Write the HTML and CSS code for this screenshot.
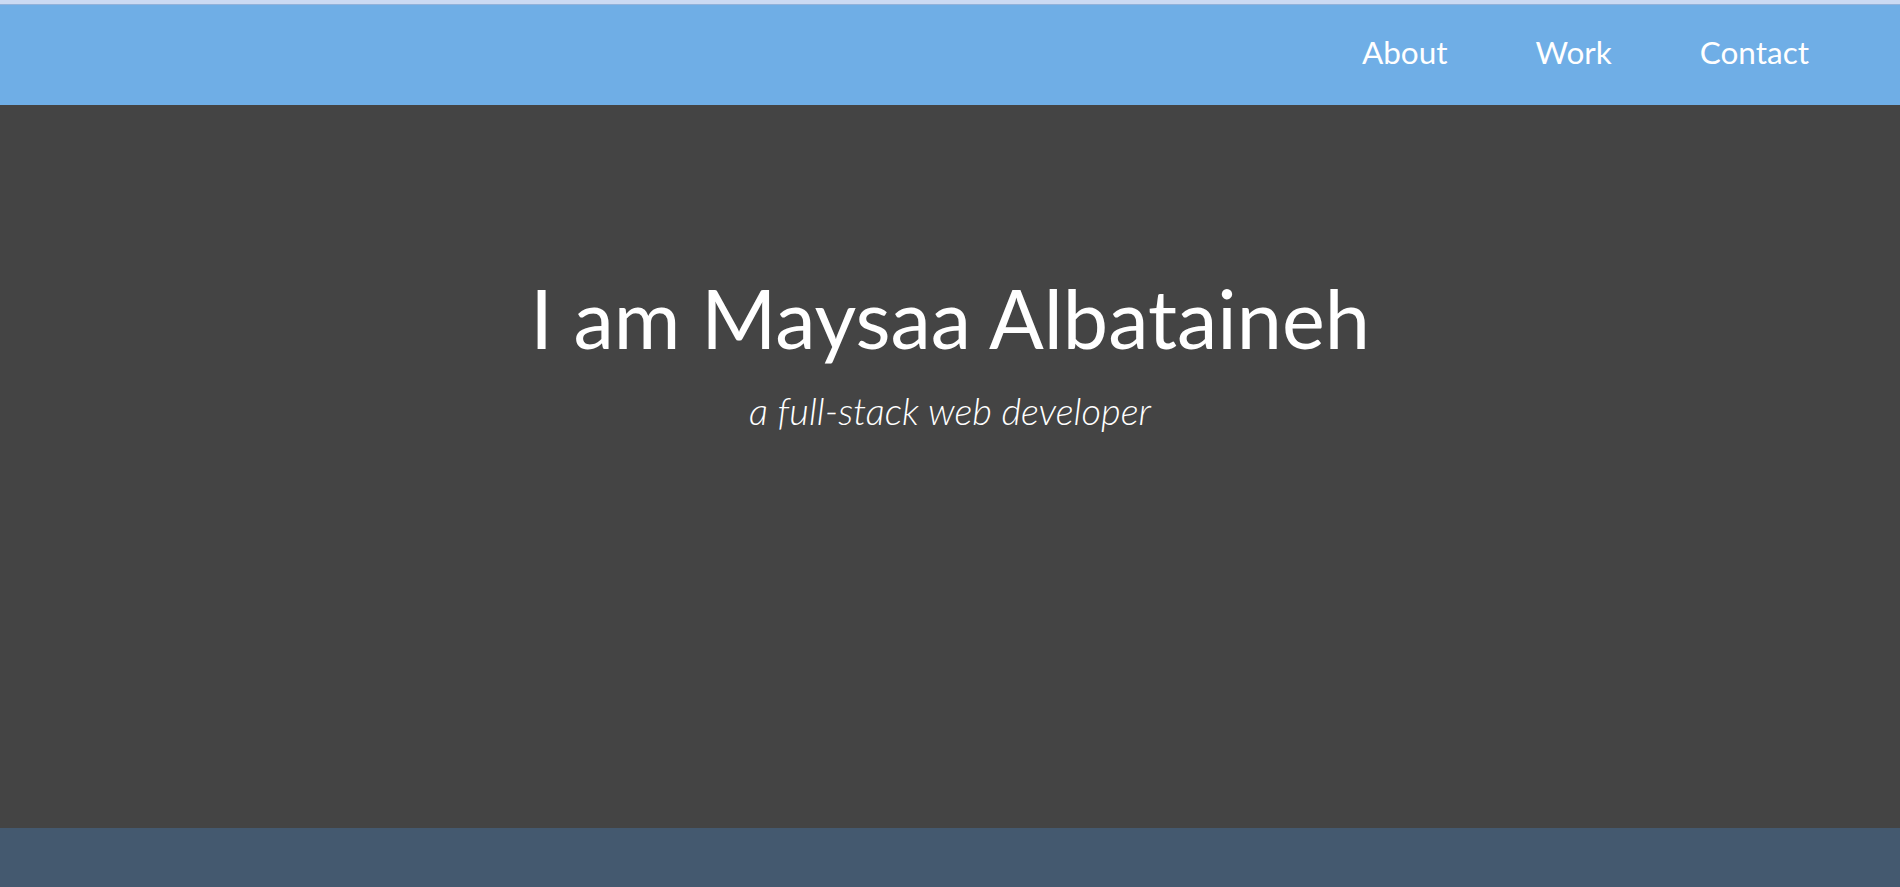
FILE: index.html
```html
<!DOCTYPE html>
<html lang="en">
<head>
<meta charset="utf-8">
<title>Maysaa Albataineh</title>
<link rel="stylesheet" href="styles.css">
</head>
<body>
<div class="topstrip"></div>
<header class="nav">
  <a class="nav-link" href="#about">About</a>
  <a class="nav-link" href="#work">Work</a>
  <a class="nav-link" href="#contact">Contact</a>
</header>
<section class="hero">
  <h1 class="hero-title">I am Maysaa Albataineh</h1>
  <p class="hero-sub">a full-stack web developer</p>
</section>
<footer class="footer"></footer>
</body>
</html>
```
FILE: styles.css
```css
html, body {
  margin: 0;
  padding: 0;
}
body {
  font-family: "Lato", "Open Sans", sans-serif;
  background: #444444;
  overflow: hidden;
}
.topstrip {
  height: 4px;
  background: #cbdaf3;
  border-bottom: 1px solid #93b2da;
}
.nav {
  height: 100px;
  box-sizing: border-box;
  background: #6faee6;
  display: flex;
  justify-content: flex-end;
  align-items: center;
  gap: 88px;
  padding: 0 91px 6px 0;
}
.nav-link {
  color: #ffffff;
  text-decoration: none;
  font-size: 31.5px;
  font-weight: 400;
}
.hero {
  height: 723px;
  background: #444444;
  text-align: center;
  color: #ffffff;
  display: flex;
  flex-direction: column;
  align-items: center;
}
.hero-title {
  margin: 172px 0 0;
  font-size: 81px;
  font-weight: 400;
  line-height: 1;
}
.hero-sub {
  margin: 33px 0 0;
  font-size: 38px;
  font-style: italic;
  font-weight: 300;
  line-height: 1;
}
.footer {
  height: 59px;
  background: #44596f;
}
```
